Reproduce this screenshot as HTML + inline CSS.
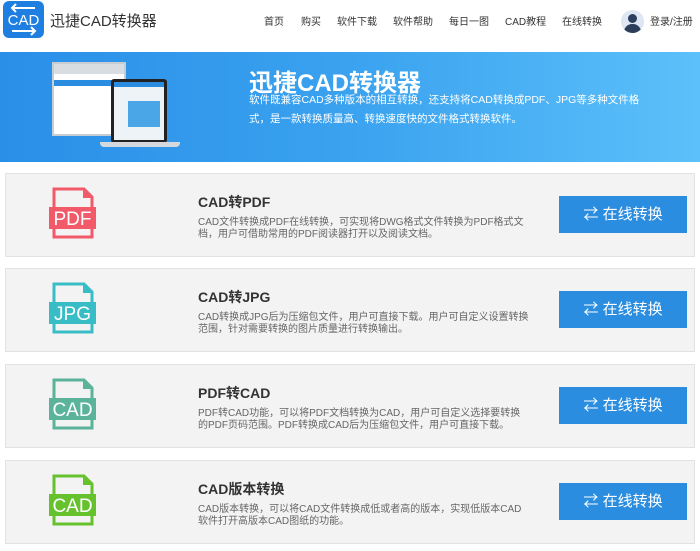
<!DOCTYPE html>
<html><head><meta charset="utf-8"><style>
*{margin:0;padding:0;box-sizing:border-box}
body{width:700px;height:551px;background:#fff;font-family:"Liberation Sans","Noto Sans CJK SC",sans-serif;position:relative;overflow:hidden;color:#333}
.hdr{position:absolute;left:0;top:0;width:700px;height:51px;background:#fff}
.logo{position:absolute;left:3px;top:1px;width:41px;height:37px;background:#1f7fe0;border-radius:6px}
.brand{position:absolute;left:50px;top:10px;font-size:15px;color:#333}
.nav{position:absolute;top:13px;font-size:10px;color:#333}
.banner{position:absolute;left:0;top:52px;width:700px;height:110px;background:linear-gradient(90deg,#2a8fe8,#3aa2ef 50%,#5cc0fa)}
.bt{position:absolute;left:249px;top:63px;font-size:24px;font-weight:bold;color:#fff}
.bd{position:absolute;left:249px;top:91px;width:405px;font-size:10.5px;line-height:19px;color:#fff}
.card{position:absolute;left:5px;width:690px;height:84px;background:#f3f3f3;border:1px solid #e2e2e2}
.card svg{position:absolute;left:42px;top:13px}
.t{position:absolute;left:192px;top:18px;font-size:14px;font-weight:bold;color:#333}
.d{position:absolute;left:192px;top:43px;width:332px;font-size:10px;line-height:12px;color:#666}
.btn{position:absolute;left:553px;top:22px;width:128px;height:37px;background:#2a8de0;color:#fff;font-size:15px;line-height:37px;text-align:center}
</style></head><body>
<div class="hdr">
<div class="logo"><svg width="41" height="37" viewBox="0 0 41 37"><path d="M32 7H9M13 3L9 7l4 4" stroke="#fff" stroke-width="2" fill="none"/><path d="M9 30h23M28 26l4 4-4 4" stroke="#fff" stroke-width="2" fill="none"/><text x="20.5" y="24" fill="#fff" font-size="15" text-anchor="middle" font-family="Liberation Sans">CAD</text></svg></div>
<div class="brand">迅捷CAD转换器</div>
<div class="nav" style="left:264px">首页</div>
<div class="nav" style="left:301px">购买</div>
<div class="nav" style="left:337px">软件下载</div>
<div class="nav" style="left:393px">软件帮助</div>
<div class="nav" style="left:449px">每日一图</div>
<div class="nav" style="left:505px">CAD教程</div>
<div class="nav" style="left:562px">在线转换</div>
<div style="position:absolute;left:621px;top:10px;width:23px;height:23px;border-radius:50%;background:#dde6f2;overflow:hidden"><div style="position:absolute;left:7px;top:4px;width:9px;height:9px;border-radius:50%;background:#2c3e5c"></div><div style="position:absolute;left:3px;top:14px;width:17px;height:12px;border-radius:8px 8px 0 0;background:#2c3e5c"></div></div>
<div class="nav" style="left:650px">登录/注册</div>
</div>
<div class="banner">
<div style="position:absolute;left:52px;top:10px;width:74px;height:74px;background:#fff;border:2px solid #c8cdd3"><div style="height:10px;background:#d8dde2"></div><div style="height:6px;margin-top:6px;background:#2a8de0"></div></div>
<div style="position:absolute;left:111px;top:27px;width:56px;height:64px;background:#222;border-radius:3px;padding:3px"><div style="width:100%;height:100%;background:#eef3f8"><div style="height:5px;background:#2a8de0"></div><div style="margin:14px 4px 0 14px;height:26px;background:#4aa6e6"></div></div></div>
<div style="position:absolute;left:100px;top:90px;width:80px;height:5px;background:#d5d8dc;border-radius:0 0 4px 4px"></div>
</div>
<div class="bt">迅捷CAD转换器</div>
<div class="bd">软件既兼容CAD多种版本的相互转换，还支持将CAD转换成PDF、JPG等多种文件格式，是一款转换质量高、转换速度快的文件格式转换软件。</div>

<div class="card" style="top:173px">
<svg width="50" height="52" viewBox="0 0 50 52"><path d="M6 2H36L44 10V50H6Z" fill="none" stroke="#f25a6a" stroke-width="3"/><path d="M36 2V10H44" fill="#f25a6a" stroke="#f25a6a" stroke-width="2"/><rect x="1" y="20" width="47" height="22" fill="#f25a6a"/><text x="24.5" y="38" fill="#fff" font-size="19" text-anchor="middle" font-family="Liberation Sans">PDF</text></svg>
<div class="t">CAD转PDF</div>
<div class="d">CAD文件转换成PDF在线转换，可实现将DWG格式文件转换为PDF格式文档，用户可借助常用的PDF阅读器打开以及阅读文档。</div>
<div class="btn">⇄ 在线转换</div></div>

<div class="card" style="top:268px">
<svg width="50" height="52" viewBox="0 0 50 52"><path d="M6 2H36L44 10V50H6Z" fill="none" stroke="#38bdc6" stroke-width="3"/><path d="M36 2V10H44" fill="#38bdc6" stroke="#38bdc6" stroke-width="2"/><rect x="1" y="20" width="47" height="22" fill="#38bdc6"/><text x="24.5" y="38" fill="#fff" font-size="19" text-anchor="middle" font-family="Liberation Sans">JPG</text></svg>
<div class="t">CAD转JPG</div>
<div class="d">CAD转换成JPG后为压缩包文件，用户可直接下载。用户可自定义设置转换范围，针对需要转换的图片质量进行转换输出。</div>
<div class="btn">⇄ 在线转换</div></div>

<div class="card" style="top:364px">
<svg width="50" height="52" viewBox="0 0 50 52"><path d="M6 2H36L44 10V50H6Z" fill="none" stroke="#5bb39a" stroke-width="3"/><path d="M36 2V10H44" fill="#5bb39a" stroke="#5bb39a" stroke-width="2"/><rect x="1" y="20" width="47" height="22" fill="#5bb39a"/><text x="24.5" y="38" fill="#fff" font-size="19" text-anchor="middle" font-family="Liberation Sans">CAD</text></svg>
<div class="t">PDF转CAD</div>
<div class="d">PDF转CAD功能，可以将PDF文档转换为CAD，用户可自定义选择要转换的PDF页码范围。PDF转换成CAD后为压缩包文件，用户可直接下载。</div>
<div class="btn">⇄ 在线转换</div></div>

<div class="card" style="top:460px">
<svg width="50" height="52" viewBox="0 0 50 52"><path d="M6 2H36L44 10V50H6Z" fill="none" stroke="#66c22c" stroke-width="3"/><path d="M36 2V10H44" fill="#66c22c" stroke="#66c22c" stroke-width="2"/><rect x="1" y="20" width="47" height="22" fill="#66c22c"/><text x="24.5" y="38" fill="#fff" font-size="19" text-anchor="middle" font-family="Liberation Sans">CAD</text></svg>
<div class="t">CAD版本转换</div>
<div class="d">CAD版本转换，可以将CAD文件转换成低或者高的版本，实现低版本CAD软件打开高版本CAD图纸的功能。</div>
<div class="btn">⇄ 在线转换</div></div>
</body></html>
